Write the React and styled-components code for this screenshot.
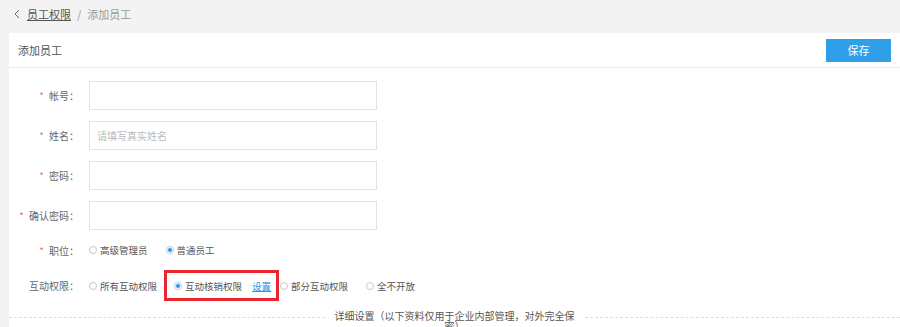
import React, { useState } from 'react';
import styled, { createGlobalStyle } from 'styled-components';

const GlobalStyle = createGlobalStyle`
  html, body {
    margin: 0;
    padding: 0;
    background: #f3f3f3;
    font-family: "Noto Sans CJK SC", "Noto Sans", "Liberation Sans", sans-serif;
    overflow: hidden;
  }
`;

const Pagina = styled.div`
  width: 900px;
  height: 327px;
  overflow: hidden;
`;

const Migas = styled.div`
  box-sizing: border-box;
  display: flex;
  align-items: center;
  height: 33px;
  padding: 0 0 5px 13px;
  font-size: 11px;
  color: #999;
  gap: 6px;
`;

const MigaEnlace = styled.a`
  color: #555;
  text-decoration: underline;
  cursor: pointer;
`;

const Tarjeta = styled.div`
  margin-left: 9px;
  background: #fff;
  min-height: 300px;
`;

const Cabecera = styled.div`
  display: flex;
  align-items: center;
  justify-content: space-between;
  height: 34px;
  padding: 0 9px;
  border-bottom: 1px solid #ececec;
  font-size: 11px;
  color: #555;
`;

const BotonGuardar = styled.button`
  width: 65px;
  height: 23px;
  border: none;
  background: #2f9fe9;
  color: #fff;
  font-family: inherit;
  font-size: 11px;
  cursor: pointer;
`;

const Formulario = styled.div`
  display: flex;
  flex-direction: column;
  padding-top: 13px;
  gap: 11px;
`;

const Fila = styled.div`
  display: flex;
  align-items: center;
  height: ${(p) => p.$alto || 29}px;
`;

const Etiqueta = styled.label`
  width: 70px;
  margin-right: 10px;
  text-align: right;
  font-size: 10px;
  color: #666;
  white-space: nowrap;
`;

const Asterisco = styled.span`
  color: #f5774e;
  margin-right: 5px;
`;

const Entrada = styled.input`
  box-sizing: border-box;
  width: 288px;
  height: 29px;
  border: 1px solid #e3e3e3;
  padding: 0 7px;
  font-family: inherit;
  font-size: 10px;
  color: #333;
  outline: none;
  &::placeholder {
    color: #bbb;
  }
`;

const GrupoRadios = styled.div`
  display: flex;
  align-items: center;
`;

const OpcionRadio = styled.label`
  display: inline-flex;
  align-items: center;
  font-size: 9.5px;
  color: #555;
  margin-right: ${(p) => p.$margen ?? 18}px;
  cursor: pointer;
  white-space: nowrap;
`;

const Circulo = styled.span`
  box-sizing: border-box;
  width: 8px;
  height: 8px;
  border-radius: 50%;
  border: 1px solid ${(p) => (p.$activo ? '#a6cdf0' : '#c8c8c8')};
  margin-right: 3px;
  display: inline-flex;
  align-items: center;
  justify-content: center;
  &::after {
    content: '';
    width: 4px;
    height: 4px;
    border-radius: 50%;
    background: ${(p) => (p.$activo ? '#2d8fe6' : 'transparent')};
  }
`;

const MarcoRojo = styled.div`
  box-sizing: border-box;
  display: flex;
  align-items: center;
  height: 31px;
  padding: 0 5px 0 7px;
  margin-right: 1px;
  border: 3px solid #e8262b;
`;

const EnlaceAjuste = styled.a`
  font-size: 9.5px;
  color: #2d8fe6;
  text-decoration: underline;
  margin-left: 10px;
  cursor: pointer;
`;

const Separador = styled.div`
  display: flex;
  align-items: flex-start;
  margin-top: 10px;
`;

const LineaPunteada = styled.div`
  flex: 1;
  border-top: 1px dashed #ddd;
  margin-top: 6px;
`;

const TextoDetalle = styled.div`
  width: 244px;
  padding: 0 8px;
  text-align: center;
  font-size: 10px;
  line-height: 10px;
  color: #555;
`;

const Radio = ({ activo, texto, margen, onClick }) => (
  <OpcionRadio $margen={margen} onClick={onClick}>
    <Circulo $activo={activo} />
    {texto}
  </OpcionRadio>
);

function App() {
  const [puesto, setPuesto] = useState('normal');
  const [permiso, setPermiso] = useState('hexiao');

  return (
    <Pagina>
      <GlobalStyle />
      <Migas>
        <svg width="8" height="10" viewBox="0 0 8 10">
          <path d="M6 1 L2 5 L6 9" fill="none" stroke="#666" strokeWidth="1" />
        </svg>
        <MigaEnlace>员工权限</MigaEnlace>
        <span>/</span>
        <span>添加员工</span>
      </Migas>
      <Tarjeta>
        <Cabecera>
          <span>添加员工</span>
          <BotonGuardar>保存</BotonGuardar>
        </Cabecera>
        <Formulario>
          <Fila>
            <Etiqueta><Asterisco>*</Asterisco>帐号：</Etiqueta>
            <Entrada />
          </Fila>
          <Fila>
            <Etiqueta><Asterisco>*</Asterisco>姓名：</Etiqueta>
            <Entrada placeholder="请填写真实姓名" />
          </Fila>
          <Fila>
            <Etiqueta><Asterisco>*</Asterisco>密码：</Etiqueta>
            <Entrada type="password" />
          </Fila>
          <Fila>
            <Etiqueta><Asterisco>*</Asterisco>确认密码：</Etiqueta>
            <Entrada type="password" />
          </Fila>
          <Fila $alto={18}>
            <Etiqueta><Asterisco>*</Asterisco>职位：</Etiqueta>
            <GrupoRadios>
              <Radio activo={puesto === 'alto'} texto="高级管理员" onClick={() => setPuesto('alto')} />
              <Radio activo={puesto === 'normal'} texto="普通员工" onClick={() => setPuesto('normal')} />
            </GrupoRadios>
          </Fila>
          <Fila $alto={31}>
            <Etiqueta>互动权限：</Etiqueta>
            <GrupoRadios>
              <Radio margen={7} activo={permiso === 'todo'} texto="所有互动权限" onClick={() => setPermiso('todo')} />
              <MarcoRojo>
                <Radio margen={0} activo={permiso === 'hexiao'} texto="互动核销权限" onClick={() => setPermiso('hexiao')} />
                <EnlaceAjuste>设置</EnlaceAjuste>
              </MarcoRojo>
              <Radio activo={permiso === 'parte'} texto="部分互动权限" onClick={() => setPermiso('parte')} />
              <Radio activo={permiso === 'nada'} texto="全不开放" onClick={() => setPermiso('nada')} />
            </GrupoRadios>
          </Fila>
        </Formulario>
        <Separador>
          <LineaPunteada />
          <TextoDetalle>详细设置（以下资料仅用于企业内部管理，对外完全保密）</TextoDetalle>
          <LineaPunteada />
        </Separador>
      </Tarjeta>
    </Pagina>
  );
}

export default App;
